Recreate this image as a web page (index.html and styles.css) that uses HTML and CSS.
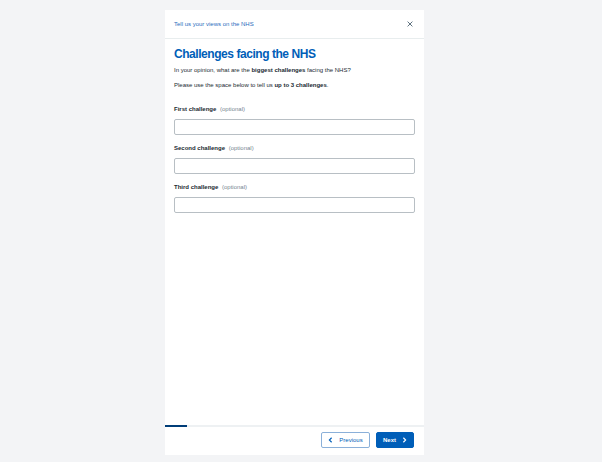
FILE: index.html
```html
<!DOCTYPE html>
<html>
<head>
<meta charset="utf-8">
<link rel="stylesheet" href="styles.css">
</head>
<body>
<div class="page">
  <div class="card">
    <div class="header">
      <span class="header-title">Tell us your views on the NHS</span>
      <svg class="close" width="6" height="6" viewBox="0 0 10 10"><path d="M1 1L9 9M9 1L1 9" stroke="#4c6272" stroke-width="1.5" fill="none"/></svg>
    </div>
    <div class="content">
      <h1 class="title">Challenges facing the NHS</h1>
      <p class="text">In your opinion, what are the <b>biggest challenges</b> facing the NHS?</p>
      <p class="text">Please use the space below to tell us <b>up to 3 challenges</b>.</p>
      <div class="fields">
        <div class="field">
          <label class="label">First challenge <span class="opt">(optional)</span></label>
          <div class="input"></div>
        </div>
        <div class="field">
          <label class="label">Second challenge <span class="opt">(optional)</span></label>
          <div class="input"></div>
        </div>
        <div class="field">
          <label class="label">Third challenge <span class="opt">(optional)</span></label>
          <div class="input"></div>
        </div>
      </div>
    </div>
    <div class="progress"><div class="progress-fill" style="width:22px"></div></div>
    <div class="footer">
      <button class="btn btn-prev"><svg width="5" height="6" viewBox="0 0 5 8"><path d="M4 1L1 4L4 7" stroke="#005eb8" stroke-width="1.5" fill="none"/></svg><span>Previous</span></button>
      <button class="btn btn-next"><span>Next</span><svg width="5" height="6" viewBox="0 0 5 8"><path d="M1 1L4 4L1 7" stroke="#fff" stroke-width="1.5" fill="none"/></svg></button>
    </div>
  </div>
</div>
</body>
</html>
```
FILE: styles.css
```css
* { box-sizing: border-box; }
html, body { margin: 0; padding: 0; }
body {
  background: #f3f4f6;
  font-family: "Liberation Sans", Arial, sans-serif;
  color: #212b32;
}
.page {
  padding: 10px 0 0 165px;
}
.card {
  width: 259px;
  height: 445px;
  background: #fff;
  display: flex;
  flex-direction: column;
}
.header {
  height: 29px;
  border-bottom: 1px solid #e8edee;
  display: flex;
  align-items: center;
  justify-content: space-between;
  padding: 0 11px 0 9px;
}
.header-title {
  font-size: 6px;
  color: #2a6ebd;
}
.close { display: block; }
.content {
  flex: 1;
  padding: 7px 9px 0 9px;
}
.title {
  margin: 0;
  font-size: 12px;
  letter-spacing: -0.45px;
  font-weight: bold;
  color: #005eb8;
  line-height: 17px;
}
.text {
  margin: 0;
  font-size: 6px;
  line-height: 8px;
  margin-top: 3px;
}
.text + .text { margin-top: 7px; }
.fields {
  margin-top: 16px;
  display: flex;
  flex-direction: column;
  gap: 9px;
}
.label {
  display: block;
  font-size: 6px;
  font-weight: bold;
  line-height: 9px;
  margin-bottom: 5px;
}
.opt {
  font-weight: normal;
  color: #768692;
  margin-left: 2px;
}
.input {
  height: 16px;
  border: 1px solid #b8bfc4;
  border-radius: 2px;
}
.progress {
  height: 2px;
  background: #eef1f3;
}
.progress-fill {
  height: 2px;
  background: #003d78;
}
.footer {
  height: 28px;
  display: flex;
  justify-content: flex-end;
  align-items: flex-start;
  gap: 6px;
  padding: 5px 10px 0 0;
}
.btn {
  height: 16px;
  font-family: "Liberation Sans", Arial, sans-serif;
  font-size: 6px;
  display: flex;
  align-items: center;
  justify-content: center;
  gap: 6px;
  border-radius: 2px;
  padding: 0;
  cursor: pointer;
}
.btn-prev {
  width: 49px;
  background: #fff;
  border: 1px solid #8bb0d9;
  color: #005eb8;
}
.btn-next {
  width: 38px;
  background: #005eb8;
  border: 1px solid #005eb8;
  color: #fff;
  font-weight: bold;
}
```
